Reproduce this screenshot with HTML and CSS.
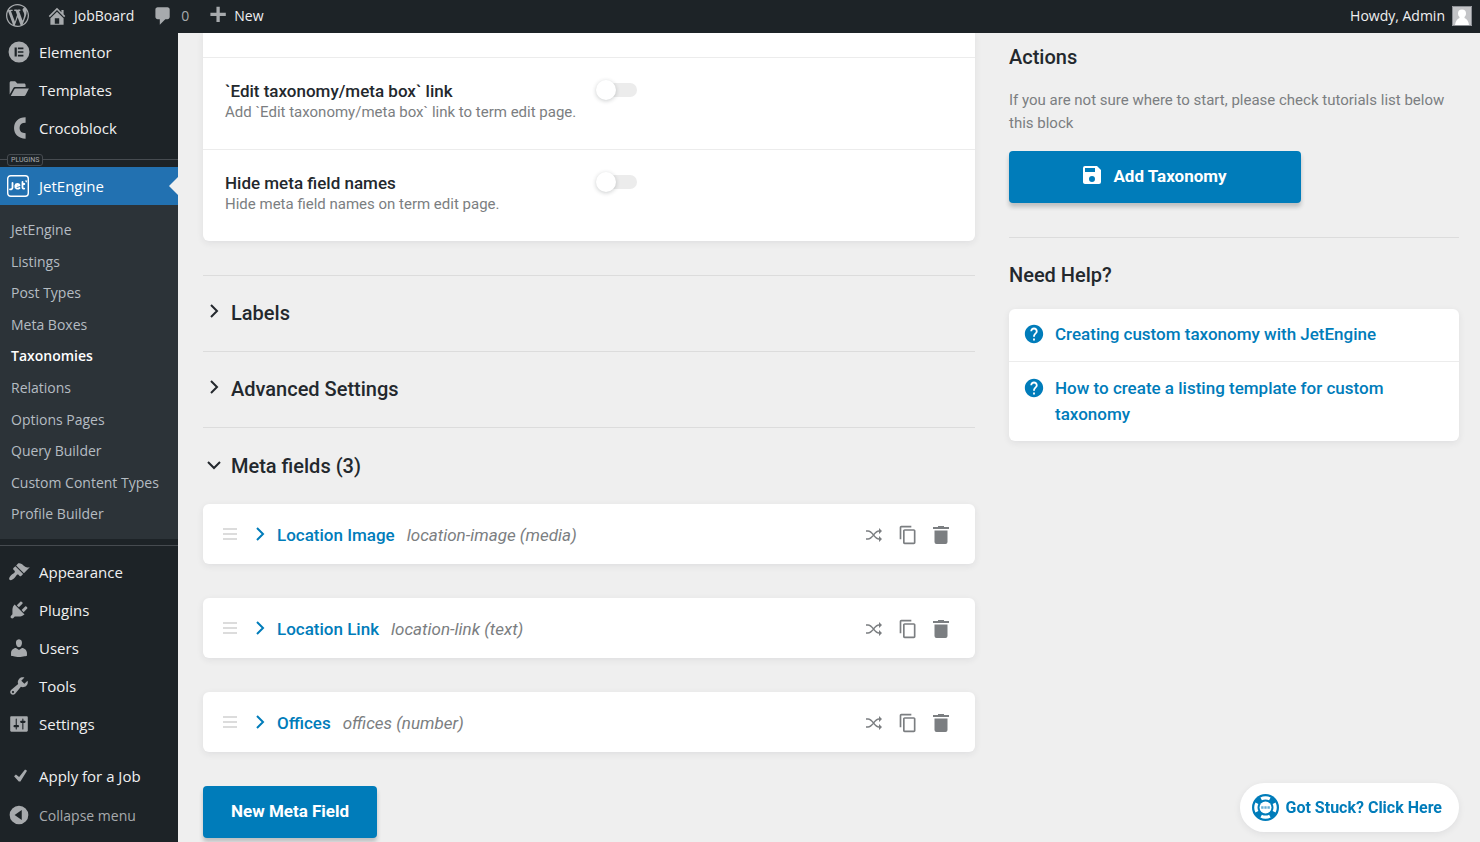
FILE: index.html
```
<!DOCTYPE html>
<html lang="en">
<head>
<meta charset="utf-8">
<meta name="viewport" content="width=device-width, initial-scale=1">
<title>Add Taxonomy - JobBoard</title>
<link rel="stylesheet" href="styles.css">
</head>
<body>
<svg class="sprite" aria-hidden="true">
  <symbol id="chevron" viewBox="0 0 14 14"><path d="M4 1l6 6-6 6" fill="none" stroke="currentColor" stroke-width="2"/></symbol>
  <symbol id="drag" viewBox="0 0 14 12"><path d="M0 0h14v2H0zM0 5h14v2H0zM0 10h14v2H0z"/></symbol>
  <symbol id="shuffle" viewBox="0 0 18 14"><path d="M1 3h2c5 0 6 8 11 8h2M1 11h2c5 0 6-8 11-8h2" fill="none" stroke="currentColor" stroke-width="1.4"/><path d="M14 0l3 3-3 3zM14 8l3 3-3 3z"/></symbol>
  <symbol id="copy" viewBox="0 0 24 24"><path d="M16 1H4c-1.100 0-2 .9-2 2v14h2V3h12V1zm3 4H8c-1.100 0-2 .9-2 2v14c0 1.100.9 2 2 2h11c1.100 0 2-.9 2-2V7c0-1.100-.9-2-2-2zm0 16H8V7h11v14z"/></symbol>
  <symbol id="trash" viewBox="0 0 16 18"><path d="M1.500 4.500h13V16a2 2 0 0 1-2 2h-9a2 2 0 0 1-2-2zM5 0h6v1h5v2H0V1h5z"/></symbol>
  <symbol id="help" viewBox="0 0 24 24"><path d="M12 2C6.480 2 2 6.480 2 12s4.480 10 10 10 10-4.480 10-10S17.520 2 12 2zm1 17h-2v-2h2v2zm2.070-7.750l-.9.920C13.450 12.900 13 13.500 13 15h-2v-.5c0-1.100.450-2.100 1.170-2.830l1.240-1.260c.370-.360.590-.860.590-1.410 0-1.100-.9-2-2-2s-2 .9-2 2H8c0-2.210 1.790-4 4-4s4 1.790 4 4c0 .880-.360 1.680-.930 2.250z"/></symbol>
</svg>

<header class="topbar">
  <nav class="topbar-group" aria-label="Toolbar">
    <a class="topbar-link" href="#" aria-label="About WordPress"><svg class="wp-icon" viewBox="0 0 20 20"><path d="M20 10c0-5.510-4.490-10-10-10C4.480 0 0 4.490 0 10c0 5.520 4.480 10 10 10 5.510 0 10-4.480 10-10zM7.780 15.370L4.370 6.220c.55-.02 1.170-.08 1.170-.08.5-.06.44-1.130-.06-1.110 0 0-1.450.11-2.370.11-.18 0-.37 0-.58-.01C4.120 2.690 6.870 1.110 10 1.110c2.330 0 4.450.87 6.050 2.340-.68-.11-1.650.39-1.650 1.580 0 .74.45 1.360.9 2.100.35.61.55 1.360.55 2.460 0 1.490-1.400 5-1.400 5l-3.030-8.370c.54-.02.82-.17.82-.17.5-.05.44-1.250-.06-1.220 0 0-1.440.12-2.380.12-.87 0-2.330-.12-2.330-.12-.5-.03-.56 1.200-.06 1.220l.92.08 1.260 3.410zM17.410 10c.24-.64.74-1.870.43-4.250.7 1.290 1.050 2.710 1.050 4.250 0 3.290-1.730 6.240-4.400 7.780.97-2.590 1.940-5.200 2.920-7.780zM6.100 18.090C3.120 16.650 1.110 13.530 1.110 10c0-1.300.23-2.480.72-3.590C3.250 10.300 4.670 14.200 6.100 18.090zm4.030-6.630l2.580 6.980c-.86.29-1.760.45-2.710.45-.79 0-1.570-.11-2.290-.33.81-2.380 1.620-4.740 2.420-7.100z"/></svg></a>
    <a class="topbar-link" href="#"><svg class="icon" viewBox="0 0 20 20"><path fill-rule="evenodd" d="M16 8.500l1.530 1.530-1.060 1.060L10 4.600l-6.470 6.490-1.060-1.060L10 2.500l4 4v-2h2v4zm-6-2.460l6 5.990V18H4v-5.970zM12 17v-5H8v5h4z"/></svg>JobBoard</a>
    <a class="topbar-link topbar-count" href="#" aria-label="0 comments"><svg class="icon" viewBox="0 0 20 20"><path d="M6 2h9c1.100 0 2 .9 2 2v7c0 1.100-.9 2-2 2h-2l-5 5v-5H6c-1.100 0-2-.9-2-2V4c0-1.100.9-2 2-2z"/></svg>0</a>
    <a class="topbar-link" href="#"><svg class="icon" viewBox="0 0 20 20"><path d="M18 7v3h-5.500v5.500h-3V10H4V7h5.500V1.500h3V7z"/></svg>New</a>
  </nav>
  <a class="topbar-user" href="#">Howdy, Admin
    <svg class="avatar" viewBox="0 0 20 20"><path fill="#c3c4c7" d="M0 0h20v20H0z"/><path fill="#fff" d="M10 3.500a4 4 0 0 1 4 4c0 1.500-.6 2.700-1.500 3.500v1c2.500 1 4 3.500 4.500 7H3c.5-3.500 2-6 4.500-7v-1A4.500 4.500 0 0 1 6 7.500a4 4 0 0 1 4-4z"/><path fill="none" stroke="#8c8f94" d="M.5.500h19v19H.5z"/></svg>
  </a>
</header>

<div class="layout">
  <nav class="sidebar" aria-label="Main menu">
    <a class="menu-item" href="#"><svg class="icon" viewBox="0 0 20 20"><path fill-rule="evenodd" d="M10 .5a9.500 9.500 0 1 0 0 19 9.500 9.500 0 0 0 0-19zM6 6h2v8H6zM9 6h5v1.500H9zM9 9.250h5v1.500H9zM9 12.500h5V14H9z"/></svg>Elementor</a>
    <a class="menu-item" href="#"><svg class="icon" viewBox="0 0 20 20"><path d="M1.500 14V3.500c0-1 .5-1.500 1.500-1.500h3.500l2 2.200h6c1 0 1.500.5 1.500 1.500v1.600H7c-1.200 0-1.900.4-2.400 1.400zM2.500 15.500l3.200-6c.3-.6.700-.9 1.400-.9h11.900L16 14.600c-.3.600-.7.900-1.400.9z"/></svg>Templates</a>
    <a class="menu-item" href="#"><svg class="icon" viewBox="0 0 20 20"><path fill="none" stroke="currentColor" stroke-width="5" d="M16 2.800c-5.500 0-8 3.200-8 7.200s2.500 7.200 8 7.200"/></svg>Crocoblock</a>
    <div class="menu-divider menu-divider-labelled"><span class="divider-label">PLUGINS</span></div>
    <a class="menu-item menu-item-current" href="#"><svg class="icon" viewBox="0 0 22 22"><rect x=".7" y=".7" width="20.600" height="20.600" rx="3" fill="none" stroke="currentColor" stroke-width="1.400"/><path fill="none" stroke="currentColor" stroke-width="1.800" stroke-linecap="round" stroke-linejoin="round" d="M5.500 8v4.500c0 1.300-1 2-2.500 1.800M8.500 11.500l4-1.200c-.4-1.600-3.600-2-4.200.4-.5 2.800 2.500 3.600 4.200 2.300M15.500 7v5.500c0 1.100.8 1.400 1.700 1.100M15.500 9h1.800"/><path d="M18 5.500h2.500l-1.300 2.300z"/></svg>JetEngine</a>
    <ul class="submenu">
      <li><a class="submenu-link" href="#">JetEngine</a></li>
      <li><a class="submenu-link" href="#">Listings</a></li>
      <li><a class="submenu-link" href="#">Post Types</a></li>
      <li><a class="submenu-link" href="#">Meta Boxes</a></li>
      <li><a class="submenu-link submenu-current" href="#" aria-current="page">Taxonomies</a></li>
      <li><a class="submenu-link" href="#">Relations</a></li>
      <li><a class="submenu-link" href="#">Options Pages</a></li>
      <li><a class="submenu-link" href="#">Query Builder</a></li>
      <li><a class="submenu-link" href="#">Custom Content Types</a></li>
      <li><a class="submenu-link" href="#">Profile Builder</a></li>
    </ul>
    <div class="menu-divider"></div>
    <a class="menu-item" href="#"><svg class="icon" viewBox="0 0 20 20"><path d="M14.480 11.060L7.410 3.990l1.500-1.500c.5-.56 2.300-.47 3.510.32 1.210.8 1.430 1.280 2.910 2.100 1.180.64 2.450 1.260 4.450.85zm-.71.710L6.700 4.700 4.930 6.470c-.39.39-.39 1.020 0 1.410l1.060 1.060c.39.39.39 1.030 0 1.420-.6.6-1.430 1.110-2.210 1.690-.35.26-.7.53-1.010.84C1.430 14.230.4 16.080 1.400 17.070c.99 1 2.840-.03 4.180-1.360.31-.31.58-.66.85-1.020.57-.78 1.080-1.610 1.690-2.210.39-.39 1.020-.39 1.410 0l1.060 1.060c.39.39 1.020.39 1.410 0z"/></svg>Appearance</a>
    <a class="menu-item" href="#"><svg class="icon" viewBox="0 0 20 20"><path d="M13.110 4.360L9.870 7.600 8 5.730l3.240-3.240c.35-.34 1.050-.2 1.560.32.52.51.66 1.210.31 1.550zm-8 1.770l.91-1.120 9.010 9.010-1.190.84c-.71.71-2.630 1.160-3.820 1.160H6.140L4.900 17.260c-.59.59-1.540.59-2.120 0-.59-.58-.59-1.530 0-2.120l1.240-1.240v-3.880c0-1.130.4-3.190 1.090-3.890zm7.260 3.970l3.240-3.240c.34-.35 1.040-.21 1.550.31.52.51.66 1.210.31 1.550l-3.240 3.250z"/></svg>Plugins</a>
    <a class="menu-item" href="#"><svg class="icon" viewBox="0 0 20 20"><path d="M10 9.250c-2.270 0-2.730-3.440-2.730-3.440C7 4.020 7.820 2 9.970 2c2.160 0 2.980 2.020 2.710 3.810 0 0-.41 3.440-2.680 3.440zm0 2.570L12.720 10c2.390 0 4.520 2.330 4.520 4.530v2.490s-3.650 1.130-7.240 1.130c-3.650 0-7.240-1.130-7.240-1.130v-2.490c0-2.250 1.940-4.480 4.470-4.480z"/></svg>Users</a>
    <a class="menu-item" href="#"><svg class="icon" viewBox="0 0 20 20"><path d="M16.680 9.770c-1.340 1.340-3.300 1.670-4.950.99l-5.410 6.520c-.99.99-2.590.99-3.580 0s-.99-2.590 0-3.570l6.520-5.420c-.68-1.650-.35-3.610.99-4.950 1.280-1.280 3.120-1.620 4.720-1.060l-2.890 2.890 2.820 2.820 2.860-2.870c.53 1.580.18 3.390-1.080 4.650zM3.810 16.210c.4.39 1.040.39 1.430 0 .4-.4.4-1.040 0-1.430-.39-.4-1.030-.4-1.430 0-.39.39-.39 1.030 0 1.430z"/></svg>Tools</a>
    <a class="menu-item" href="#"><svg class="icon" viewBox="0 0 20 20"><path d="M18 16V4c0-.55-.45-1-1-1H3c-.55 0-1 .45-1 1v12c0 .55.45 1 1 1h14c.55 0 1-.45 1-1zM8 11h1c.55 0 1 .45 1 1s-.45 1-1 1H8v1.500c0 .28-.22.5-.5.5s-.5-.22-.5-.5V13H6c-.55 0-1-.45-1-1s.45-1 1-1h1V5.500c0-.28.22-.5.5-.5s.5.22.5.5V11zm5-2h-1c-.55 0-1-.45-1-1s.45-1 1-1h1V5.500c0-.28.22-.5.5-.5s.5.22.5.5V7h1c.55 0 1 .45 1 1s-.45 1-1 1h-1v5.500c0 .28-.22.5-.5.5s-.5-.22-.5-.5V9z"/></svg>Settings</a>
    <a class="menu-item menu-item-spaced" href="#"><svg class="icon" viewBox="0 0 20 20"><path d="M15.500 4l1.800 1.200-6 9.800H9.800L5.500 10.200l1.700-1.600 2.900 2.300z"/></svg>Apply for a Job</a>
    <button class="menu-item menu-collapse" type="button"><svg class="icon" viewBox="0 0 20 20"><path fill-rule="evenodd" d="M10 1.500a8.500 8.500 0 1 0 0 17 8.500 8.500 0 0 0 0-17zM12.500 5.500v9L6 10z"/></svg>Collapse menu</button>
  </nav>

  <main class="page">
    <div class="content">
      <section class="card settings">
        <div class="setting">
          <label class="setting-text" for="edit-link"><span class="setting-title">`Edit taxonomy/meta box` link</span><span class="setting-note">Add `Edit taxonomy/meta box` link to term edit page.</span></label>
          <input class="switch" type="checkbox" role="switch" id="edit-link">
        </div>
        <div class="setting">
          <label class="setting-text" for="hide-names"><span class="setting-title">Hide meta field names</span><span class="setting-note">Hide meta field names on term edit page.</span></label>
          <input class="switch" type="checkbox" role="switch" id="hide-names">
        </div>
      </section>

      <button class="accordion" type="button" aria-expanded="false"><svg class="chevron"><use href="#chevron"/></svg>Labels</button>
      <button class="accordion" type="button" aria-expanded="false"><svg class="chevron"><use href="#chevron"/></svg>Advanced Settings</button>
      <button class="accordion accordion-open" type="button" aria-expanded="true"><svg class="chevron chevron-open"><use href="#chevron"/></svg>Meta fields (3)</button>

      <div class="fields">
        <article class="card field">
          <svg class="drag"><use href="#drag"/></svg>
          <button class="field-toggle" type="button"><svg class="chevron"><use href="#chevron"/></svg>Location Image</button>
          <em class="field-type">location-image (media)</em>
          <div class="field-actions">
            <button class="action" type="button" aria-label="Conditions"><svg class="shuffle"><use href="#shuffle"/></svg></button>
            <button class="action" type="button" aria-label="Copy"><svg class="copy"><use href="#copy"/></svg></button>
            <button class="action" type="button" aria-label="Delete"><svg class="trash"><use href="#trash"/></svg></button>
          </div>
        </article>
        <article class="card field">
          <svg class="drag"><use href="#drag"/></svg>
          <button class="field-toggle" type="button"><svg class="chevron"><use href="#chevron"/></svg>Location Link</button>
          <em class="field-type">location-link (text)</em>
          <div class="field-actions">
            <button class="action" type="button" aria-label="Conditions"><svg class="shuffle"><use href="#shuffle"/></svg></button>
            <button class="action" type="button" aria-label="Copy"><svg class="copy"><use href="#copy"/></svg></button>
            <button class="action" type="button" aria-label="Delete"><svg class="trash"><use href="#trash"/></svg></button>
          </div>
        </article>
        <article class="card field">
          <svg class="drag"><use href="#drag"/></svg>
          <button class="field-toggle" type="button"><svg class="chevron"><use href="#chevron"/></svg>Offices</button>
          <em class="field-type">offices (number)</em>
          <div class="field-actions">
            <button class="action" type="button" aria-label="Conditions"><svg class="shuffle"><use href="#shuffle"/></svg></button>
            <button class="action" type="button" aria-label="Copy"><svg class="copy"><use href="#copy"/></svg></button>
            <button class="action" type="button" aria-label="Delete"><svg class="trash"><use href="#trash"/></svg></button>
          </div>
        </article>
        <button class="primary" type="button">New Meta Field</button>
      </div>
    </div>

    <aside class="aside">
      <section class="actions">
        <h2 class="heading">Actions</h2>
        <p class="hint">If you are not sure where to start, please check tutorials list below this block</p>
        <button class="primary primary-wide" type="button"><svg class="save" viewBox="0 0 18 18"><path fill-rule="evenodd" d="M14 0H2a2 2 0 0 0-2 2v14c0 1.100.9 2 2 2h14a2 2 0 0 0 2-2V4zM9 16a3 3 0 1 1 0-6 3 3 0 0 1 0 6zm3-10H2V2h10z"/></svg>Add Taxonomy</button>
      </section>
      <section>
        <h2 class="heading">Need Help?</h2>
        <div class="card help">
          <a class="help-link" href="#"><svg class="help-icon"><use href="#help"/></svg><span>Creating custom taxonomy with JetEngine</span></a>
          <a class="help-link" href="#"><svg class="help-icon"><use href="#help"/></svg><span>How to create a listing template for custom taxonomy</span></a>
        </div>
      </section>
    </aside>
  </main>
</div>

<a class="stuck" href="#"><svg class="buoy" viewBox="0 0 28 28"><circle cx="14" cy="14" r="14" fill="#007cba"/><circle cx="14" cy="14" r="10" fill="none" stroke="#fff" stroke-width="3.400" pathLength="360" stroke-dasharray="54 36" stroke-dashoffset="27"/><circle cx="14" cy="14" r="6.200" fill="#fff"/><path d="M9.500 12.800h2.500v2.400H9.500zM12.800 12.800h2.400v2.400h-2.400zM16 12.800h2.500v2.400H16z" fill="#007cba" opacity=".6"/></svg>Got Stuck? Click Here</a>
</body>
</html>
```
FILE: styles.css
```
* { box-sizing: border-box; }

body {
  margin: 0;
  min-height: 100vh;
  display: flex;
  flex-direction: column;
  background: #efefef;
  color: #23282d;
  font-family: Roboto, "Liberation Sans", sans-serif;
  font-size: 17px;
}

a { color: inherit; text-decoration: none; }

button {
  border: 0;
  padding: 0;
  background: none;
  color: inherit;
  font: inherit;
  text-align: left;
  cursor: pointer;
}

svg { flex: none; fill: currentColor; }

.sprite { position: absolute; width: 0; height: 0; }

.icon { width: 22px; height: 22px; color: #a7aaad; }

/* Toolbar */
.topbar {
  position: sticky;
  top: 0;
  z-index: 2;
  display: flex;
  justify-content: space-between;
  align-items: center;
  height: 33px;
  padding: 0 8px 2px 6px;
  background: #1d2327;
  color: #f0f0f1;
  font: 14px "Segoe UI", "Open Sans", sans-serif;
}

.topbar-group { display: flex; align-items: center; gap: 17px; }
.topbar-link { display: flex; align-items: center; gap: 6px; }
.topbar-count { gap: 8px; color: #a7aaad; }
.topbar-user { display: flex; align-items: center; gap: 7px; }
.wp-icon { width: 23px; height: 23px; color: #a7aaad; }
.avatar { width: 20px; height: 20px; }

/* Main menu */
.layout { flex: 1; display: flex; }

.sidebar {
  flex: none;
  width: 178px;
  background: #1d2327;
  color: #f0f0f1;
  font: 15px "Segoe UI", "Open Sans", sans-serif;
}

.menu-item {
  position: relative;
  display: flex;
  align-items: center;
  gap: 9px;
  width: 100%;
  height: 38px;
  padding: 0 0 1px 8px;
}

.menu-item-current { background: #2271b1; color: #fff; padding-left: 7px; gap: 10px; }
.menu-item-current .icon { color: #fff; }

.menu-item-current::after {
  content: "";
  position: absolute;
  right: 0;
  top: 10px;
  border: 9px solid transparent;
  border-left: 0;
  border-right-color: #efefef;
}

.menu-item-spaced { margin: 14px 0 1px; }
.menu-collapse { color: #a7aaad; font-size: 14px; }

.menu-divider { height: 1px; margin: 6px 0 8px; background: #464b50; }
.menu-divider-labelled { display: flex; align-items: center; margin: 12px 0 7px; }

.divider-label {
  margin-left: 7px;
  padding: 0 3px;
  border: 1px solid #464b50;
  border-radius: 3px;
  background: #1d2327;
  color: #a7aaad;
  font: 7px/10px Roboto, sans-serif;
}

.submenu { margin: 0; padding: 9px 0; list-style: none; background: #2c3338; font-size: 14px; }
.submenu-link { display: block; padding: 6px 11px; color: #b5bcc2; line-height: 1.4; }
.submenu-current { color: #fff; font-weight: 600; }

/* Page */
.page {
  flex: 1;
  min-width: 0;
  display: grid;
  grid-template-columns: minmax(0, 1fr) 450px;
  gap: 34px;
  align-items: start;
  padding: 0 21px 0 25px;
}

.card { border-radius: 6px; background: #fff; box-shadow: 0 2px 7px rgba(35, 40, 45, .08); }

.settings { margin-bottom: 34px; padding-top: 24px; border-radius: 0 0 6px 6px; }

.setting {
  display: grid;
  grid-template-columns: 1fr 1fr;
  gap: 12px;
  align-items: start;
  padding: 22px 22px 27px;
  border-top: 1px solid #ececec;
}

.setting-title { display: block; font-weight: 500; line-height: 22px; }
.setting-note { display: block; color: #7b7e81; font-size: 15px; line-height: 20px; }

.switch {
  appearance: none;
  position: relative;
  width: 40px;
  height: 14px;
  margin: 3px 0 0 2px;
  border-radius: 7px;
  background: #ececec;
}

.switch::before {
  content: "";
  position: absolute;
  left: -1px;
  top: -3px;
  width: 20px;
  height: 20px;
  border-radius: 50%;
  background: #fff;
  box-shadow: 0 1px 4px rgba(35, 40, 45, .24);
}

.accordion {
  display: flex;
  align-items: center;
  gap: 10px;
  width: 100%;
  height: 76px;
  padding: 0 0 2px 4px;
  border-top: 1px solid #dcdcdc;
  font-size: 20px;
  font-weight: 500;
}

.accordion-open { height: 77px; padding-bottom: 0; }

.chevron { width: 14px; height: 14px; margin-bottom: 3px; }
.chevron-open { transform: rotate(90deg); }

.fields { display: flex; flex-direction: column; align-items: stretch; gap: 34px; }
.field { display: flex; align-items: center; height: 60px; padding: 2px 26px 0 20px; }
.drag { width: 14px; height: 12px; margin-bottom: 2px; color: #dcdcdc; }
.field-toggle { display: flex; align-items: center; gap: 10px; margin-left: 16px; color: #007cba; font-weight: 500; }
.field-type { margin-left: 12px; color: #7b7e81; }
.field-actions { display: flex; align-items: center; gap: 15px; margin-left: auto; color: #7b7e81; }
.action { display: flex; }
.shuffle { width: 18px; height: 14px; }
.copy { width: 20px; height: 20px; }
.trash { width: 16px; height: 18px; }

.primary {
  align-self: start;
  height: 52px;
  padding: 0 28px 2px;
  border-radius: 4px;
  background: #007cba;
  box-shadow: 0 4px 4px rgba(35, 40, 45, .24);
  color: #fff;
  font-weight: 700;
}

.primary-wide { display: flex; justify-content: center; align-items: center; gap: 12px; width: 292px; }
.save { width: 18px; height: 18px; margin-bottom: 2px; }

.actions { margin-bottom: 25px; padding: 12px 0 34px; border-bottom: 1px solid #dcdcdc; }
.heading { margin: 0; font-size: 20px; font-weight: 500; line-height: 24px; }
.hint { margin: 20px 0 16px; color: #7b7e81; font-size: 15px; line-height: 23px; }

.help { margin-top: 22px; }
.help-link { display: flex; gap: 10px; padding: 12px 14px 14px; color: #007cba; font-weight: 500; line-height: 26px; }
.help-link + .help-link { padding-top: 13px; border-top: 1px solid #ececec; }
.help-icon { width: 22px; height: 22px; margin-top: 2px; }

.stuck {
  position: fixed;
  right: 21px;
  bottom: 10px;
  z-index: 3;
  display: flex;
  align-items: center;
  gap: 7px;
  height: 49px;
  padding: 0 17px 0 12px;
  border-radius: 25px;
  background: #fff;
  box-shadow: 0 2px 7px rgba(35, 40, 45, .08);
  color: #007cba;
  font-size: 16px;
  font-weight: 700;
}

.buoy { width: 27px; height: 27px; }
```
